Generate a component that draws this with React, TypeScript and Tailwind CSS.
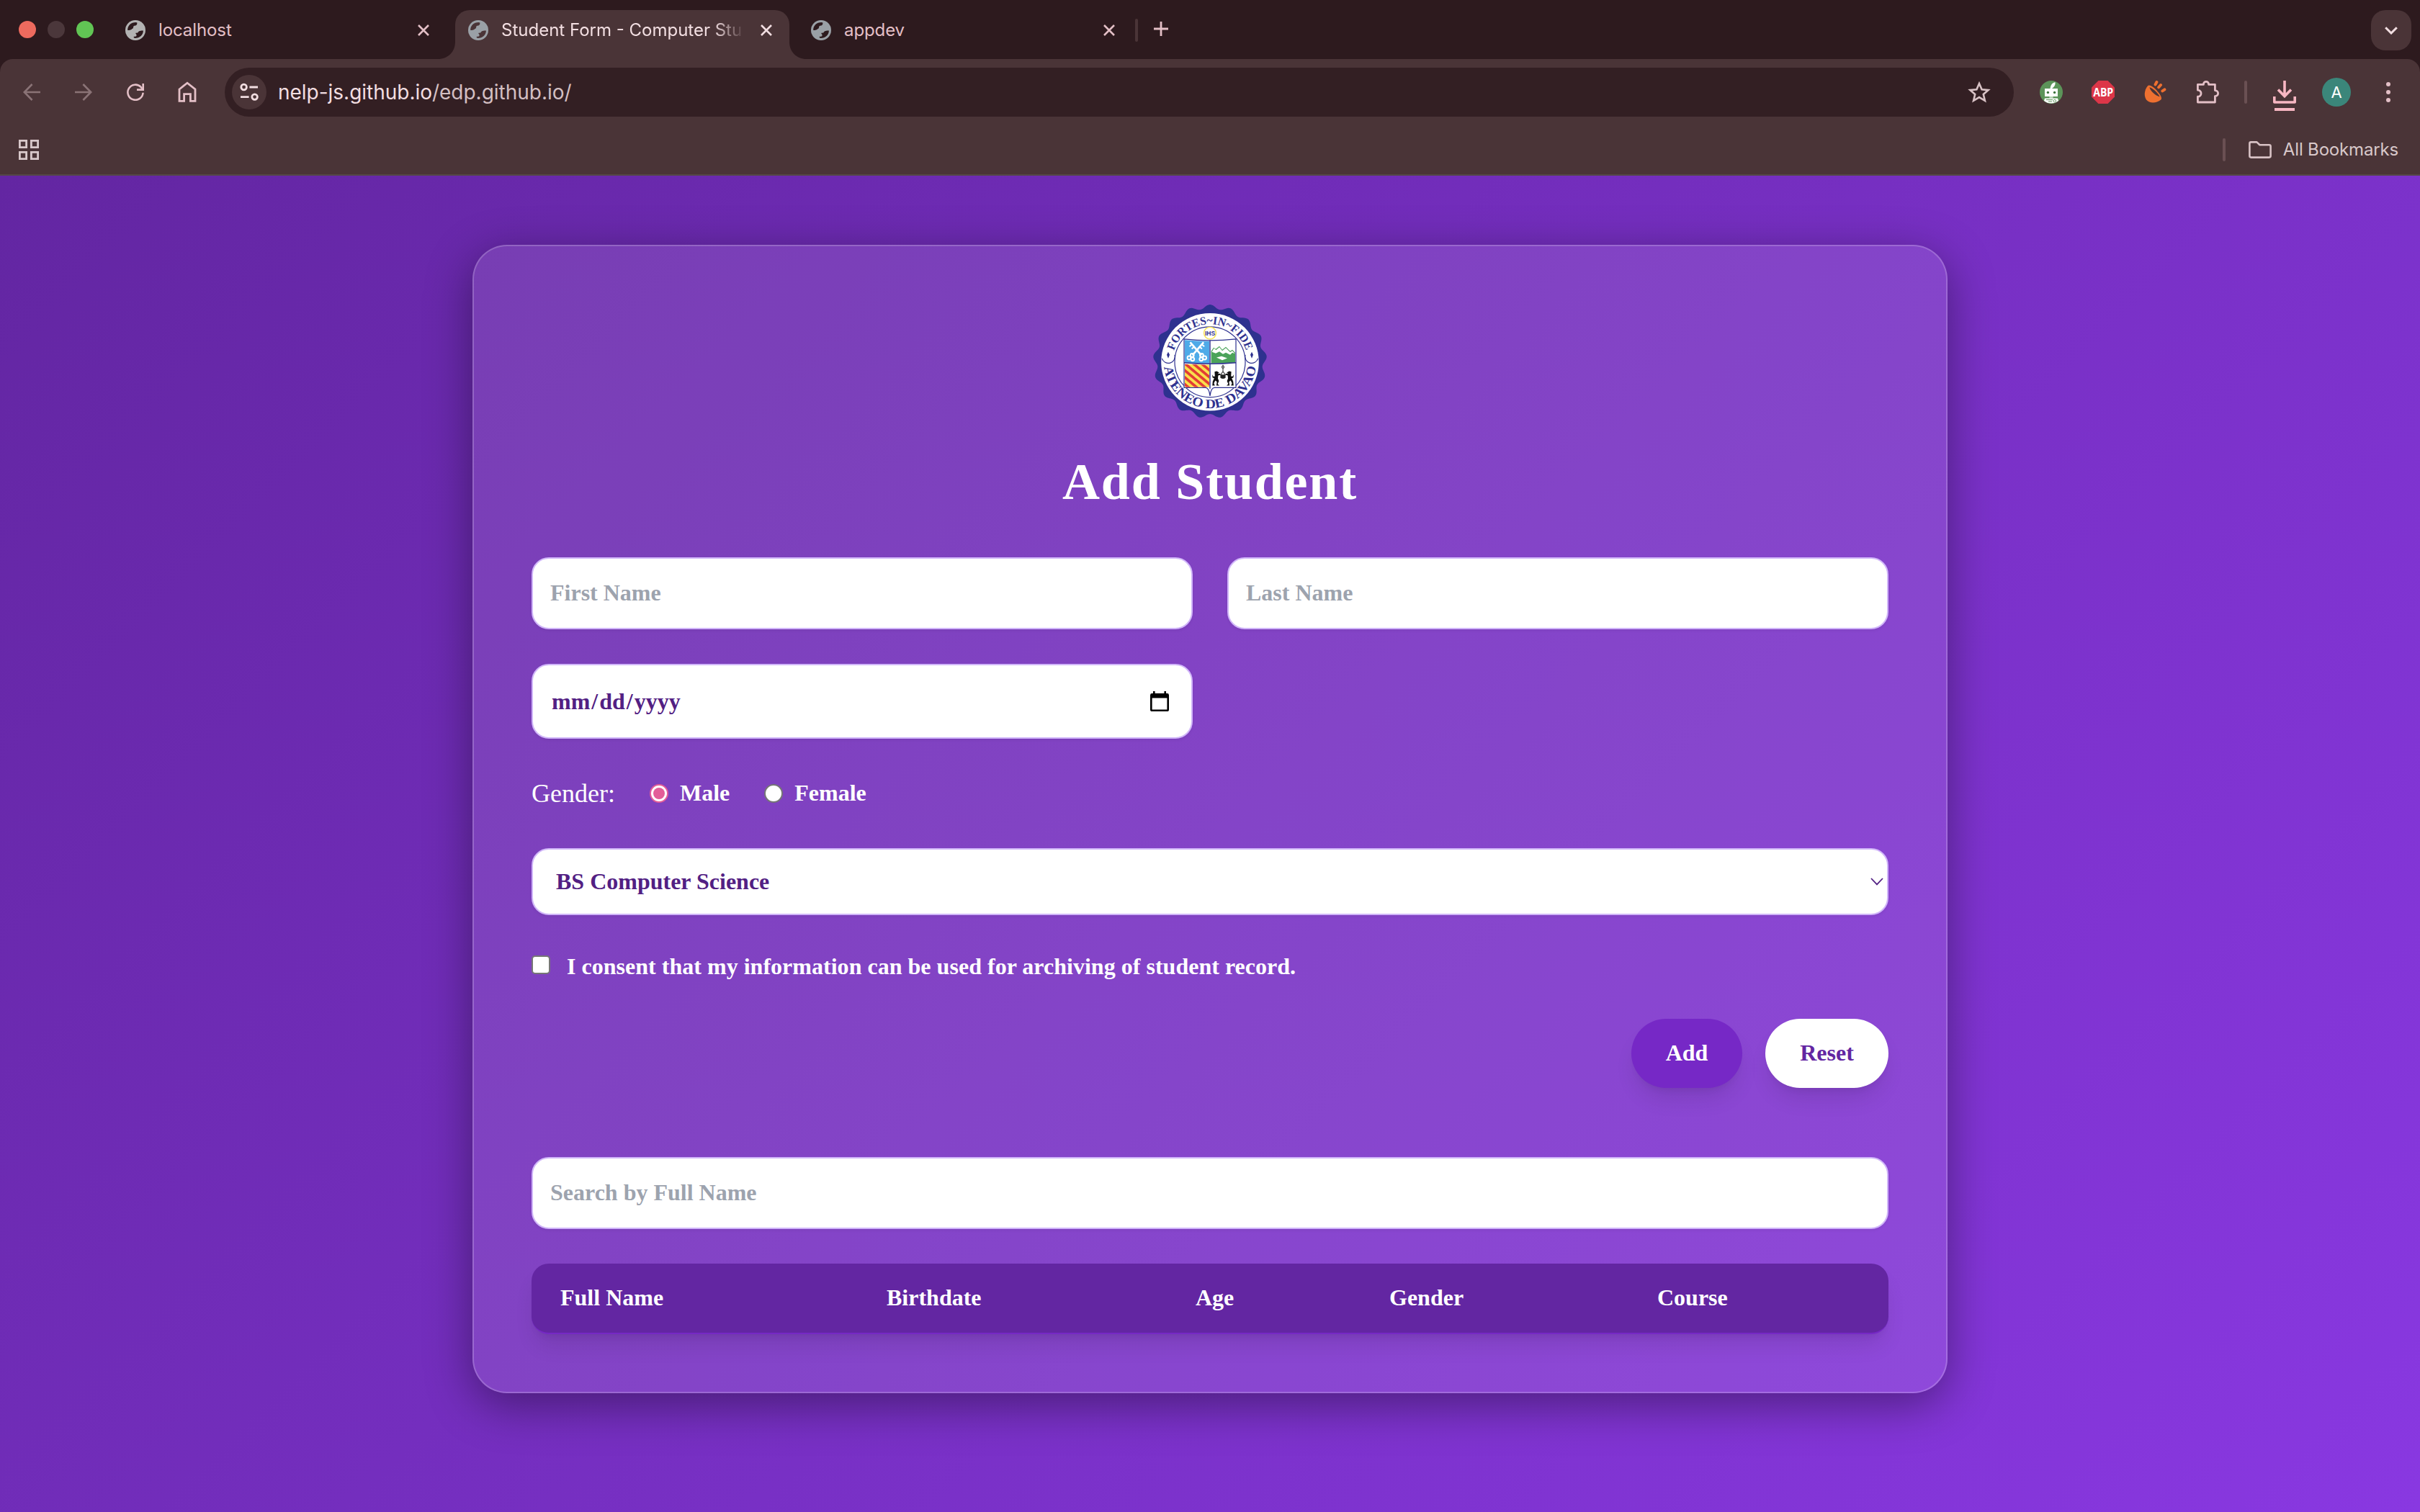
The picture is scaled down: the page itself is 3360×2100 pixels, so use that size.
import React from "react";

const SANS = "font-['Inter','Liberation_Sans',sans-serif]";
const SERIF = "font-['Liberation_Serif',serif]";

function Globe({ fg, bg }: { fg: string; bg: string }) {
  return (
    <svg viewBox="0 0 28 28" className="h-7 w-7 shrink-0">
      <circle cx="14" cy="14" r="14" fill={fg} />
      <path d="M3.2 14C3 7.6 8 3 14.6 3.1L16.4 3.4C16.6 6.4 15.2 7.6 12.6 7.8C10.2 8.2 12.2 11.6 9.4 12C8.4 13.4 6.2 14 3.2 14Z" fill={bg} />
      <path d="M24.9 14.4C24.8 20.4 20 25 13.2 24.9C12 24.8 10.8 23.4 12.4 22.8C14.2 22.6 15.6 22.6 15.6 21C15.6 19 13.4 18.6 14.6 17.8L17.4 17.4C18 15.4 20 14.2 24.9 14.4Z" fill={bg} />
    </svg>
  );
}

function Close({ color }: { color: string }) {
  return (
    <svg viewBox="0 0 16 16" className="h-4 w-4 shrink-0" fill="none" stroke={color} strokeWidth="2.6">
      <path d="M1 1L15 15M15 1L1 15" />
    </svg>
  );
}

function TabStrip() {
  return (
    <div className="flex h-[82px] shrink-0 items-start bg-[#2d1a1e] pt-[14px]">
      <div className="flex h-[54px] items-center gap-4 pl-[26px]">
        <span className="h-6 w-6 rounded-full bg-[#ed6a5e]" />
        <span className="h-6 w-6 rounded-full bg-[#4b373b]" />
        <span className="h-6 w-6 rounded-full bg-[#61c554]" />
      </div>
      <div className="ml-11 flex h-14 w-[458px] items-center pr-9">
        <Globe fg="#b3b3b3" bg="#2d1a1e" />
        <span className="ml-[18px] flex-1 text-2xl tracking-[-0.1px] text-[#e3bfc6]">localhost</span>
        <Close color="#e3bfc6" />
      </div>
      <div className="relative flex h-[68px] w-[464px] items-center rounded-t-[20px] bg-[#4a3437] pr-6 pb-3 pl-[18px]">
        <svg viewBox="0 0 24 24" className="absolute bottom-0 left-[-24px] h-6 w-6">
          <path d="M24 0V24H0C14 24 24 14 24 0Z" fill="#4a3437" />
        </svg>
        <svg viewBox="0 0 24 24" className="absolute right-[-24px] bottom-0 h-6 w-6">
          <path d="M0 0V24H24C10 24 0 14 0 0Z" fill="#4a3437" />
        </svg>
        <Globe fg="#9aa0a6" bg="#4a3437" />
        <span className="ml-[18px] w-[338px] text-2xl whitespace-nowrap text-[#f2dee1] [mask-image:linear-gradient(to_right,#000_87%,transparent)]">
          Student Form - Computer Stu
        </span>
        <span className="flex-1" />
        <Close color="#f2dee1" />
      </div>
      <div className="ml-[30px] flex h-14 w-[422px] items-center">
        <Globe fg="#9aa0a6" bg="#2d1a1e" />
        <span className="ml-[18px] flex-1 text-2xl tracking-[-0.1px] text-[#e3bfc6]">appdev</span>
        <Close color="#e3bfc6" />
      </div>
      <span className="mt-3 ml-7 h-8 w-1 rounded-full bg-[#4a3437]" />
      <svg viewBox="0 0 20 20" className="mt-4 ml-[22px] h-5 w-5" stroke="#e3bfc6" strokeWidth="2.8">
        <path d="M10 0V20M0 10H20" />
      </svg>
      <span className="flex-1" />
      <div className="mr-3 flex h-14 w-14 items-center justify-center rounded-[20px] bg-[#4a3437]">
        <svg viewBox="0 0 18 11" className="h-[11px] w-[18px]" fill="none" stroke="#f2dee1" strokeWidth="3">
          <path d="M1.2 1.2L9 9L16.8 1.2" />
        </svg>
      </div>
    </div>
  );
}

function Toolbar() {
  return (
    <div className="bg-[#2d1a1e]">
      <div className="flex h-[92px] items-center rounded-t-[18px] bg-[#4a3437]">
        <svg viewBox="0 0 24 24" className="ml-8 h-6 w-6" fill="none" stroke="#8a7376" strokeWidth="2.6">
          <path d="M24 12H2M12.6 1L1.8 12L12.6 23" />
        </svg>
        <svg viewBox="0 0 24 24" className="ml-12 h-6 w-6" fill="none" stroke="#8a7376" strokeWidth="2.6">
          <path d="M0 12H22M11.4 1L22.2 12L11.4 23" />
        </svg>
        <svg viewBox="0 0 24 24" className="ml-12 h-6 w-6" fill="none" stroke="#e3bfc6" strokeWidth="2.6">
          <path d="M22.6 12.8A10.6 10.6 0 1 1 19.6 4.8L22 8" />
          <path d="M22.7 0V8.6H14" />
        </svg>
        <svg viewBox="0 0 26 30" className="ml-[47px] h-[30px] w-[26px]" fill="none" stroke="#e3bfc6" strokeWidth="2.8">
          <path d="M2 11L13 2.2L24 11V27.4H17.4V17.6H8.6V27.4H2Z" />
        </svg>
        <div className="ml-[39px] flex h-[68px] w-[2484px] items-center rounded-full bg-[#331f23] pr-8 pl-[10px]">
          <div className="flex h-12 w-12 items-center justify-center rounded-full bg-[#4a3437]">
            <svg viewBox="0 0 26 26" className="h-[26px] w-[26px]" fill="none" stroke="#f2dee1" strokeWidth="2.8">
              <circle cx="5.6" cy="6" r="3.8" />
              <path d="M13.4 6H25M1 19.6H12.6" />
              <circle cx="20.6" cy="19.6" r="3.8" />
            </svg>
          </div>
          <span className="ml-4 flex-1 text-[28px] tracking-[-0.02px] text-[#f2dee1]">
            nelp-js.github.io<span className="text-[#d3bfc2]">/edp.github.io/</span>
          </span>
          <svg viewBox="0 0 32 30" className="h-[30px] w-8" fill="none" stroke="#d8c2c5" strokeWidth="2.6">
            <path d="M16 3L19.6 11.3L28.6 12.1L21.8 18L23.9 26.8L16 22.1L8.1 26.8L10.2 18L3.4 12.1L12.4 11.3Z" />
          </svg>
        </div>
        <svg viewBox="0 0 32 32" className="ml-9 h-8 w-8">
          <circle cx="16" cy="16" r="16" fill="#5c9459" />
          <path d="M14.5 11C15 6 18 2.4 21.6 2.2C22 6 20 9 17 11Z" fill="#fff" />
          <path d="M7 11H25V22H7Z" fill="#fff" />
          <circle cx="11.4" cy="16.4" r="1.7" fill="#39733a" />
          <circle cx="20.6" cy="16.4" r="1.7" fill="#39733a" />
          <path d="M13.4 22H18.6V24.4H13.4Z" fill="#b9d4b8" />
          <path d="M7 24.4H25L26 28A16 16 0 0 1 6 28Z" fill="#fff" />
          <path d="M9 26.6H18M12 29H17" stroke="#5c9459" strokeWidth="1" />
          <circle cx="20.8" cy="28.2" r="1.8" fill="none" stroke="#5c9459" strokeWidth="0.9" />
        </svg>
        <svg viewBox="0 0 32 32" className="ml-10 h-8 w-8">
          <path d="M9.4 0H22.6L32 9.4V22.6L22.6 32H9.4L0 22.6V9.4Z" fill="#dc3648" />
          <text x="16.2" y="21.8" textAnchor="middle" textLength="28" lengthAdjust="spacingAndGlyphs" fill="#fff" className="font-['Open_Sans',sans-serif] text-[16.5px] font-bold">
            ABP
          </text>
        </svg>
        <svg viewBox="0 0 32 32" className="ml-10 h-8 w-8" fill="none">
          <path d="M5.8 7.4C1 13.4 0.6 21.6 4 26.4C8.6 32 18 31.4 24.2 26.4C26 24.6 24.8 21 20 15.4C14.4 9 8.6 4.6 5.8 7.4Z" fill="#ee7030" />
          <path d="M8.4 9.2C12 9.6 20.6 17 22.6 22.4C16.6 20.6 10 15 8.4 9.2Z" fill="#4a3437" />
          <path d="M16.6 5.4L18.4 2M21.2 9.2L24 6M26.4 14.4L29.4 12.4" stroke="#ee7030" strokeWidth="4" strokeLinecap="round" />
        </svg>
        <svg viewBox="0 0 34 34" className="ml-10 h-[34px] w-[34px]" fill="none" stroke="#e3bfc6" strokeWidth="2.8" strokeLinejoin="round">
          <path d="M3.4 6.4H11.4C11.4 1 18.6 1 18.6 6.4H27.4V14.6C33 14.6 33 22.6 27.4 22.6V31H3.4V23.2C9.6 23.2 9.6 14.2 3.4 14.2Z" />
        </svg>
        <span className="ml-[34px] h-8 w-1 rounded-full bg-[#6a5053]" />
        <svg viewBox="0 0 32 42" className="mt-[10px] ml-9 h-[42px] w-8" fill="none" stroke="#f7b6c2" strokeWidth="3.6">
          <path d="M16 0V22M7 12.6L16 21.6L25 12.6" />
          <path d="M1.8 22V30H30.2V22" strokeLinejoin="round" />
          <path d="M2 40H30" strokeWidth="4" />
        </svg>
        <div className="ml-9 flex h-10 w-10 items-center justify-center rounded-full bg-[#3b867a] text-[22px] text-white">A</div>
        <div className="ml-[49px] flex flex-col gap-[5px]">
          <span className="h-[6px] w-[6px] rounded-full bg-[#e3bfc6]" />
          <span className="h-[6px] w-[6px] rounded-full bg-[#e3bfc6]" />
          <span className="h-[6px] w-[6px] rounded-full bg-[#e3bfc6]" />
        </div>
      </div>
      <div className="flex h-[70px] items-center border-b-2 border-[#544746] bg-[#4a3437] pr-[30px] pl-[26px]">
        <svg viewBox="0 0 28 28" className="h-7 w-7" fill="none" stroke="#d8c8ca" strokeWidth="2.8">
          <path d="M1.4 1.4H10.6V10.6H1.4ZM17.4 1.4H26.6V10.6H17.4ZM1.4 17.4H10.6V26.6H1.4ZM17.4 17.4H26.6V26.6H17.4Z" />
        </svg>
        <span className="flex-1" />
        <span className="h-8 w-1 rounded-full bg-[#6a5053]" />
        <svg viewBox="0 0 32 24" className="ml-8 h-6 w-8" fill="none" stroke="#d8c2c5" strokeWidth="2.6" strokeLinejoin="round">
          <path d="M1.4 3.4Q1.4 1.4 3.4 1.4H11.4L15.4 5.2H28.6Q30.6 5.2 30.6 7.2V20.6Q30.6 22.6 28.6 22.6H3.4Q1.4 22.6 1.4 20.6Z" />
        </svg>
        <span className="ml-4 text-2xl tracking-[-0.17px] text-[#d8c8ca]">All Bookmarks</span>
      </div>
    </div>
  );
}

const scallops = Array.from({ length: 341 }, (_, i) => {
  const t = (i / 340) * Math.PI * 2;
  const r = 76 + 3 * Math.cos(17 * t);
  return `${i ? "L" : "M"}${(r * Math.sin(t)).toFixed(2)} ${(-r * Math.cos(t)).toFixed(2)}`;
}).join("");

function Key({ flip }: { flip?: boolean }) {
  return (
    <g transform={flip ? "translate(-36.4 0) scale(-1 1)" : undefined} stroke="#fff" fill="none">
      <path d="M-27.5 -27.5L-12 -9.5" strokeWidth="2.6" />
      <path d="M-25.5 -24L-28.5 -21.5M-22.6 -20.6L-25.4 -18.2" strokeWidth="2" />
      <g strokeWidth="2">
        <circle cx="-11.6" cy="-9.4" r="2.4" />
        <circle cx="-7.4" cy="-5.8" r="2.4" />
        <circle cx="-12.2" cy="-4" r="2.4" />
      </g>
    </g>
  );
}

function Wolf({ flip }: { flip?: boolean }) {
  return (
    <path
      transform={flip ? "translate(36 0) scale(-1 1)" : undefined}
      d="M6.4 13.4L9.4 12.6L12.8 14.8L10.6 16.4L13.6 16L15.2 17.8L11.4 18.8L11 23L12.4 26.4L10.6 30.4L13 32.6H8.8L9.6 27.4L7.4 25.8L5.4 29.4L6.8 32.6H3.2L3.8 27L5.8 22.4L3.6 21.8L2.8 17.2L4.4 20L6.8 20Z"
      fill="#111"
    />
  );
}

function Seal() {
  return (
    <svg viewBox="-80 -80 160 160" className="h-40 w-40">
      <defs>
        <path id="seal-top" d="M-52.6 0A52.6 52.6 0 0 1 52.6 0" />
        <path id="seal-bottom" d="M-64 0A64 64 0 0 0 64 0" />
        <pattern id="seal-bars" width="7.4" height="7.4" patternUnits="userSpaceOnUse" patternTransform="rotate(40)">
          <rect width="7.4" height="7.4" fill="#f9e04c" />
          <rect width="7.4" height="3.6" fill="#e23b34" />
        </pattern>
      </defs>
      <path d={scallops + "Z"} fill="#2e318f" />
      <g transform="translate(0 0.8)">
        <circle r="67.8" fill="#fff" />
        <circle r="49" fill="none" stroke="#2e318f" strokeWidth="1.2" />
        <g fill="none" stroke="#2e318f" strokeWidth="1.2">
          <path d="M-66.6 -5A8.6 8.6 0 0 0 -49 -10" />
          <path d="M66.6 -5A8.6 8.6 0 0 1 49 -10" />
        </g>
        <path d="M-58 -14L-56 -10L-58 -5L-60 -10ZM58 -14L60 -10L58 -5L56 -10Z" fill="#2e318f" />
        <text fill="#2e318f" className="font-['Liberation_Serif',serif] text-[16px] font-bold">
          <textPath href="#seal-top" startOffset="16" textLength="133" lengthAdjust="spacingAndGlyphs">
            FORTES~IN~FIDE
          </textPath>
        </text>
        <text fill="#2e318f" className="font-['Liberation_Serif',serif] text-[18px] font-bold">
          <textPath href="#seal-bottom" startOffset="7" textLength="187" lengthAdjust="spacingAndGlyphs">
            ATENEO DE DAVAO
          </textPath>
        </text>
        <circle cy="-40.2" r="8.4" fill="#fff" stroke="#f6e35a" strokeWidth="1.6" />
        <text y="-36.6" textAnchor="middle" fill="#2e318f" className="font-['Liberation_Sans',sans-serif] text-[8.5px] font-bold">
          IHS
        </text>
        <path d="M-36 -32Q0 -28 36 -32V35.6H6Q1.4 36 0 47Q-1.4 36 -6 35.6H-36Z" fill="#fff" stroke="#2e318f" strokeWidth="1.2" />
        <path d="M-35 -30.6Q-18 -29 -1 -28.8V2L-35 0.6Z" fill="#4eaae8" />
        <Key />
        <Key flip />
        <path d="M1.6 -15L5 -20L8 -18L13 -22L17 -17L22 -21L28 -15L31 -17L35 -13V1L1.6 2Z" fill="#4ba35a" />
        <path d="M2.6 -14L5.6 -19L8.4 -16.6L13 -20.6L17 -15.6L22 -19.6L28 -13.6L31 -15.6L34.6 -11.6L31 -13L28 -10L22 -13L18 -11L13 -14.6L8 -12Z" fill="#fff" />
        <path d="M9 -6.4L16 -8L24 -5.4L17 -2.6Z" fill="#fff" />
        <path d="M-35 3L-1 4V35H-35Z" fill="url(#seal-bars)" />
        <Wolf />
        <Wolf flip />
        <path d="M18 4V13M18 13L14.6 18M18 13L21.4 18" stroke="#444" strokeWidth="1.2" fill="none" />
        <circle cx="18" cy="7" r="1.8" fill="none" stroke="#444" strokeWidth="0.9" />
        <path d="M14.4 17.4H21.6V22Q18 24.4 14.4 22Z" fill="#222" />
        <path d="M0 -30V37M-36 1Q0 4 36 1" stroke="#2e318f" strokeWidth="1.4" fill="none" />
      </g>
    </svg>
  );
}

const FIELD = "w-full rounded-3xl border-2 border-[#d0b5f9] bg-white shadow-[0_2px_4px_rgba(0,0,0,0.05)]";

function StudentForm() {
  return (
    <form className="flex flex-col gap-12">
      <div className="grid grid-cols-2 gap-12">
        <input type="text" placeholder="First Name" className={FIELD + " h-[100px] px-6 pb-[2px] text-[32px] leading-[48px] font-bold placeholder:text-[#9da3ae]"} />
        <input type="text" placeholder="Last Name" className={FIELD + " h-[100px] px-6 pb-[2px] text-[32px] leading-[48px] font-bold placeholder:text-[#9da3ae]"} />
        <div className={FIELD + " flex h-[104px] items-center justify-between px-6 pb-px text-[32px] leading-[48px] font-bold text-[#522083]"}>
          <span className="flex">
            <span className="px-[2px]">mm</span>/<span className="px-[2px]">dd</span>/<span className="px-[2px]">yyyy</span>
          </span>
          <svg viewBox="0 0 26 28" className="mr-[7px] h-7 w-[26px]">
            <path d="M4 0H6.6V3H19.4V0H22V3H23.5Q26 3 26 5.4V25.4Q26 28 23.5 28H2.5Q0 28 0 25.4V5.4Q0 3 2.5 3H4ZM2.6 9.4V25.4H23.4V9.4Z" fill="#000" fillRule="evenodd" />
          </svg>
        </div>
      </div>
      <div className="flex h-14 items-center text-[32px] leading-[48px] font-bold text-white">
        <span className="pb-px text-4xl leading-[56px] font-normal">Gender:</span>
        <span className="ml-12 flex h-[26px] w-[26px] items-center justify-center rounded-full border-2 border-[#e35d98] bg-white">
          <span className="h-4 w-4 rounded-full bg-[#e35d98]" />
        </span>
        <span className="ml-4 pb-[2px]">Male</span>
        <span className="ml-12 h-[26px] w-[26px] rounded-full border-2 border-[#767676] bg-white" />
        <span className="ml-4 pb-[2px]">Female</span>
      </div>
      <div className={FIELD + " flex h-[93px] items-center justify-between pr-[5px] pb-px pl-8 text-[32px] leading-[48px] font-bold text-[#522083]"}>
        BS Computer Science
        <svg viewBox="0 0 18 11" className="h-[11px] w-[18px]" fill="none" stroke="#522083" strokeWidth="1.8">
          <path d="M1 1L9 9.4L17 1" />
        </svg>
      </div>
      <div className="flex h-12 items-center text-[32px] leading-[48px] font-bold text-white">
        <span className="mb-[6px] h-[26px] w-[26px] rounded-[5px] border-2 border-[#767676] bg-white" />
        <span className="ml-[23px] pb-[2px] tracking-[0.02px]">I consent that my information can be used for archiving of student record.</span>
      </div>
      <div className="flex justify-end gap-8">
        <button type="button" className="h-24 w-[154px] rounded-full bg-[#7628c6] pb-[2px] text-[32px] leading-[48px] font-bold text-white shadow-[0_20px_30px_-6px_rgba(0,0,0,0.1),0_8px_12px_-8px_rgba(0,0,0,0.1)]">
          Add
        </button>
        <button type="reset" className="h-24 w-[171px] rounded-full bg-white pb-[2px] text-[32px] leading-[48px] font-bold text-[#6326a2] shadow-[0_20px_30px_-6px_rgba(0,0,0,0.1),0_8px_12px_-8px_rgba(0,0,0,0.1)]">
          Reset
        </button>
      </div>
    </form>
  );
}

export default function App() {
  return (
    <div className={`${SANS} flex h-[2100px] w-[3360px] flex-col overflow-hidden`}>
      <TabStrip />
      <Toolbar />
      <main className={`${SERIF} flex-1 bg-[linear-gradient(135deg,#6326a2,#8938e1)] pt-24`}>
        <section className="mx-auto h-[1595px] w-[2048px] rounded-[48px] border-2 border-white/20 bg-white/10 p-20 shadow-[0_16px_64px_rgba(0,0,0,0.4)]">
          <div className="flex justify-center">
            <Seal />
          </div>
          <h1 className="mt-[47px] mb-[65px] text-center text-[72px] leading-[80px] font-bold tracking-[1.8px] text-white">Add Student</h1>
          <StudentForm />
          <input type="text" placeholder="Search by Full Name" className={FIELD + " mt-24 block h-[100px] px-6 pb-[2px] text-[32px] leading-[48px] font-bold placeholder:text-[#9da3ae]"} />
          <div className="mt-12 grid h-[98px] grid-cols-[453px_429px_269px_372px_1fr] items-center overflow-hidden rounded-3xl border-b-2 border-[#7628c6] bg-[#6326a2] pb-[2px] pl-10 text-[32px] leading-[48px] font-bold text-white shadow-[0_20px_30px_-6px_rgba(0,0,0,0.1),0_8px_12px_-8px_rgba(0,0,0,0.1)]">
            <span>Full Name</span>
            <span>Birthdate</span>
            <span>Age</span>
            <span>Gender</span>
            <span>Course</span>
          </div>
        </section>
      </main>
    </div>
  );
}
